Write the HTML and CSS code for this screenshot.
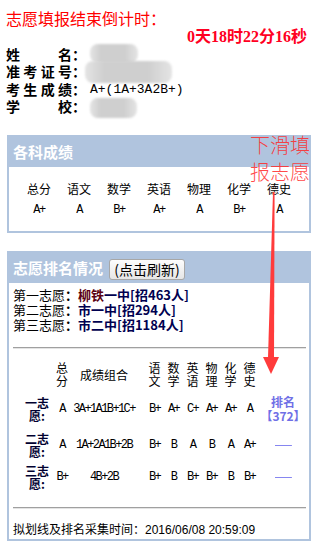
FILE: index.html
```html
<!DOCTYPE html>
<html lang="zh-CN">
<head>
<meta charset="utf-8">
<title>志愿填报</title>
<link rel="stylesheet" href="styles.css">
</head>
<body>
<div class="page">
  <div class="title">志愿填报结束倒计时：</div>
  <div class="countdown">0天18时22分16秒</div>
  <div class="info">
    <div class="row"><span class="lbl">姓名</span><span class="colon">：</span><span class="val"></span></div>
    <div class="row"><span class="lbl">准考证号</span><span class="colon">：</span><span class="val"></span></div>
    <div class="row"><span class="lbl">考生成绩</span><span class="colon">：</span><span class="val mono">A+(1A+3A2B+)</span></div>
    <div class="row"><span class="lbl">学校</span><span class="colon">：</span><span class="val"></span></div>
  </div>
  <span class="blur b1"></span>
  <span class="blur b2"></span>
  <span class="blur b3"></span>

  <section class="panel p1">
    <div class="phead"><h2>各科成绩</h2></div>
    <div class="pbody">
      <div class="scores">
        <span>总分</span><span>语文</span><span>数学</span><span>英语</span><span>物理</span><span>化学</span><span>德史</span>
        <span class="v">A+</span><span class="v">A</span><span class="v">B+</span><span class="v">A+</span><span class="v">A</span><span class="v">B+</span><span class="v">A</span>
      </div>
    </div>
  </section>

  <section class="panel p2">
    <div class="phead"><h2>志愿排名情况</h2><button class="refresh">(点击刷新)</button></div>
    <div class="pbody">
      <div class="choices">
        <div>第一志愿<b>：</b><b class="school"><span class="maroon">柳铁</span>一中[招463人]</b></div>
        <div>第二志愿<b>：</b><b class="school">市一中[招294人]</b></div>
        <div>第三志愿<b>：</b><b class="school">市二中[招1184人]</b></div>
      </div>
      <hr class="sep">
      <div class="rank">
        <span></span><span class="h">总分</span><span class="h wide">成绩组合</span><span class="h">语文</span><span class="h">数学</span><span class="h">英语</span><span class="h">物理</span><span class="h">化学</span><span class="h">德史</span><span></span>

        <span class="rl">一志愿:</span><span class="m">A</span><span class="m wide">3A+1A1B+1C+</span><span class="m">B+</span><span class="m">A+</span><span class="m">C+</span><span class="m">A+</span><span class="m">A+</span><span class="m">A</span><span class="pos">排名<br>【372】</span>

        <span class="rl">二志愿:</span><span class="m">A</span><span class="m wide">1A+2A1B+2B</span><span class="m">B+</span><span class="m">B</span><span class="m">A</span><span class="m">B</span><span class="m">A</span><span class="m">A+</span><span class="pos dash">—</span>

        <span class="rl">三志愿:</span><span class="m">B+</span><span class="m wide">4B+2B</span><span class="m">B+</span><span class="m">B</span><span class="m">B+</span><span class="m">B+</span><span class="m">B</span><span class="m">B+</span><span class="pos dash">—</span>
      </div>
      <hr class="sep sep2">
      <div class="footer">拟划线及排名采集时间：<span class="time">2016/06/08 20:59:09</span></div>
    </div>
  </section>

  <div class="hint">下滑填<br>报志愿</div>
  <svg class="arrow" width="22" height="190" viewBox="0 0 22 190" aria-hidden="true">
    <polygon points="13,4 14.6,4 14,170 8,170" fill="#ff3b3b"/>
    <polygon points="3,169 19,169 11,186" fill="#ff3b3b"/>
  </svg>
</div>
</body>
</html>
```

FILE: styles.css
```css
html, body {
  margin: 0;
  padding: 0;
  background: #fff;
}

body {
  font-family: "Noto Sans CJK SC", sans-serif;
  color: #000;
}

.page {
  position: relative;
  width: 317px;
  height: 544px;
  box-sizing: border-box;
  padding: 8px 10px 0 6px;
  overflow: hidden;
}

.title {
  font-size: 16px;
  line-height: 20px;
  color: #ff0000;
}

.countdown {
  font-family: "Liberation Serif", "Noto Sans CJK SC", serif;
  font-size: 16px;
  line-height: 18px;
  font-weight: bold;
  color: #ff0022;
  text-align: right;
}

.info .row {
  display: flex;
  align-items: center;
  height: 17.3px;
  font-size: 14px;
}

.lbl {
  display: inline-block;
  width: 66px;
  text-align: justify;
  text-align-last: justify;
  font-weight: bold;
  line-height: 17px;
}

.colon {
  display: inline-block;
  width: 18px;
  font-weight: bold;
  line-height: 17px;
}

.val {
  line-height: 17px;
}

.mono {
  font-family: "Liberation Mono", monospace;
  font-size: 13px;
}

.blur {
  position: absolute;
  display: block;
  border-radius: 8px;
  filter: blur(1.2px);
  background: linear-gradient(90deg, #e4e4e4 0%, #cfcfcf 22%, #cfcfcf 72%, #e4e4e4 100%);
}

.b1 { left: 90px; top: 44px; width: 48px; height: 19px; }
.b2 { left: 85px; top: 61px; width: 87px; height: 22px; }
.b3 { left: 90px; top: 98px; width: 47px; height: 20px; }

.panel {
  width: 304px;
  box-sizing: border-box;
  margin-left: 1px;
  border: 2px solid #b0c4de;
  background: #fff;
}

.p1 { margin-top: 20px; }
.p2 { margin-top: 18px; }

.phead {
  height: 30px;
  background: #b0c4de;
  display: flex;
  align-items: center;
  padding-left: 4px;
}

.phead h2 {
  margin: 0;
  font-size: 15px;
  font-weight: bold;
  color: #fff;
  line-height: 20px;
}

.refresh {
  margin-left: 6px;
  width: 76px;
  height: 21px;
  padding: 0;
  font-family: "Noto Sans CJK SC", sans-serif;
  font-size: 14px;
  line-height: 18px;
  color: #000;
  border: 1px solid #a7a7a7;
  border-radius: 3px;
  background: linear-gradient(#fdfdfd, #e6e6e6);
  margin-top: 2px;
}

.p1 .pbody {
  padding: 14px 0 13px;
}

.scores {
  display: grid;
  grid-template-columns: repeat(7, 40px);
  grid-template-rows: 16px 16px;
  row-gap: 5px;
  justify-content: center;
  justify-items: center;
  align-items: center;
  font-size: 12px;
  line-height: 16px;
}

.scores .v {
  font-family: "Liberation Mono", monospace;
  font-size: 12px;
  letter-spacing: -1.5px;
}

.p2 .pbody {
  padding: 4px 4px 1px;
}

.choices {
  font-size: 13px;
  line-height: 15px;
}

.school {
  color: #000050;
}

.maroon {
  color: #5a0010;
}

.sep {
  margin: 15px 0 0;
  height: 0;
  border: 0;
  border-top: 1px solid #a0a0a0;
  border-bottom: 1px solid #e4e4e4;
  width: 293px;
}

.rank {
  margin: 9px 0 0 11px;
  display: grid;
  grid-template-columns: 26px 24px 71px repeat(6, 19px) 48px;
  grid-template-rows: 32px 38px 34px 30px;
  align-items: center;
  justify-items: center;
  font-size: 12px;
  line-height: 13px;
  text-align: center;
}

.rank .h {
  width: 13px;
}

.rank .h.wide {
  width: auto;
  white-space: nowrap;
}

.rank .wide {
  padding-right: 11px;
}

.rank .rl {
  width: 26px;
  font-weight: bold;
  color: #000030;
}

.rank .m {
  font-family: "Liberation Mono", monospace;
  font-size: 12px;
  letter-spacing: -1.6px;
  white-space: nowrap;
}

.rank .pos {
  font-weight: bold;
  color: #6f6fe6;
  line-height: 14px;
}

.rank .dash {
  display: inline-block;
  font-family: "Liberation Sans", sans-serif;
  font-size: 13px;
  font-weight: normal;
  color: #7676ee;
  transform: scaleX(1.3);
}

.sep2 {
  margin-top: 15px;
}

.footer {
  margin-top: 12px;
  font-size: 12px;
  line-height: 16px;
}

.time {
  font-family: "Liberation Sans", sans-serif;
  font-size: 12px;
}

.hint {
  position: absolute;
  left: 250px;
  top: 131px;
  font-size: 20px;
  line-height: 27px;
  font-weight: 300;
  color: rgba(255, 40, 40, 0.85);
}

.arrow {
  position: absolute;
  left: 260px;
  top: 188px;
}
```
